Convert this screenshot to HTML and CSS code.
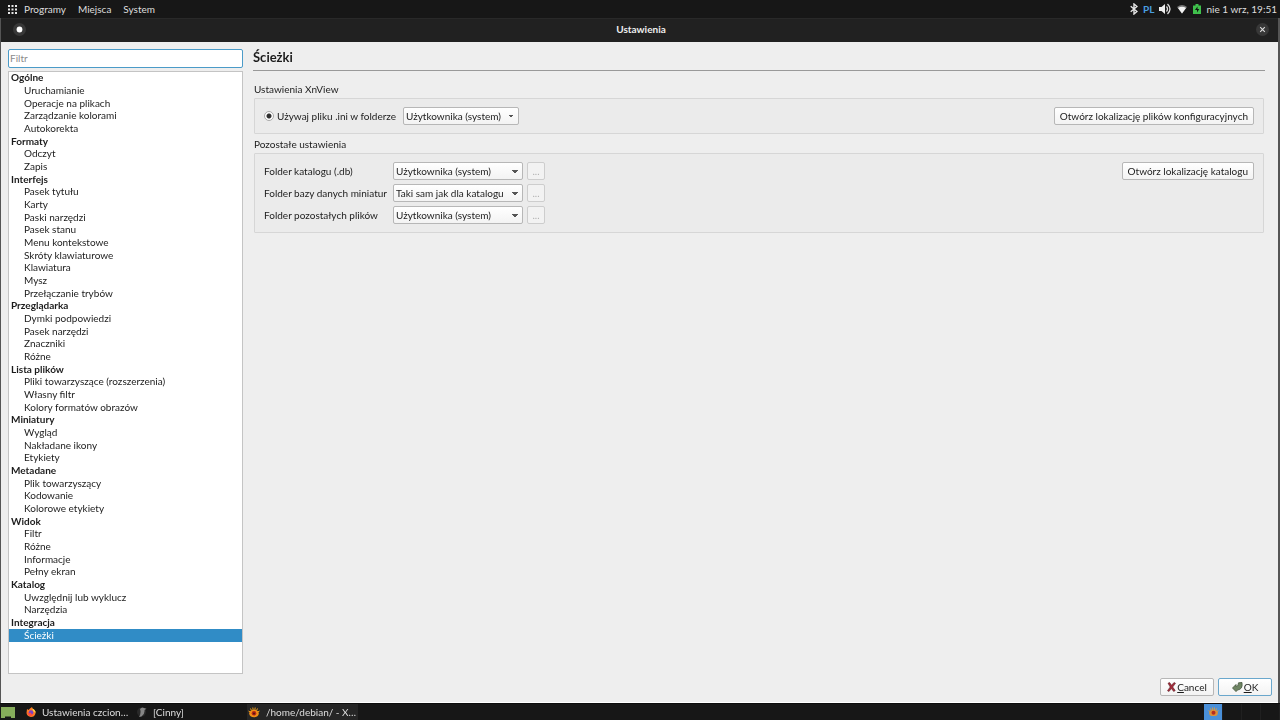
FILE: index.html
```html
<!DOCTYPE html>
<html lang="pl">
<head>
<meta charset="utf-8">
<title>Ustawienia</title>
<link rel="stylesheet" href="styles.css">
</head>
<body>
<header class="panel">
  <nav class="panel-menu">
    <svg class="grid-icon" viewBox="0 0 9 9" width="9" height="9" fill="#e8e8e8"><path d="M0 0h2v2H0zM3.5 0h2v2h-2zM7 0h2v2H7zM0 3.5h2v2H0zM3.5 3.5h2v2h-2zM7 3.5h2v2H7zM0 7h2v2H0zM3.5 7h2v2h-2zM7 7h2v2H7z"/></svg>
    <button class="menu-button">Programy</button>
    <button class="menu-button">Miejsca</button>
    <button class="menu-button">System</button>
  </nav>
  <div class="tray">
    <svg class="bluetooth" viewBox="0 0 8 12" width="8" height="12" fill="none" stroke="#e6e6e6" stroke-width="1.4"><path d="M.700 3.300 7 8.500 4 11V1l3 2.500-6.300 5.200"/></svg>
    <span class="layout">PL</span>
    <svg class="volume" viewBox="0 0 12 12" width="12" height="12"><path d="M0 4h2.500L6 1v10L2.500 8H0z" fill="#eee"/><path d="M7.500 3.500q2 2.500 0 5M8.500 1q5 5 0 10" fill="none" stroke="#ddd" stroke-width="1.300"/></svg>
    <svg class="wifi" viewBox="0 0 12 10" width="12" height="10"><path d="M1 3Q6-1 11 3L6 9.500z" fill="#777"/><path d="M2 4Q6 1.500 10 4L6 9.500z" fill="#f2f2f2"/></svg>
    <svg class="battery" viewBox="0 0 8 10" width="8" height="10"><path d="M2.500 0h3v1.500H8V10H0V1.500h2.500z" fill="#3fc04c"/><path d="M4.500 2.500 2 6h2v2.500L6.300 5H4.500z" fill="#111"/></svg>
    <time class="clock">nie 1 wrz, 19:51</time>
  </div>
</header>

<section class="window">
  <header class="titlebar">
    <button class="round-button" aria-label="Menu okna"><svg viewBox="0 0 13 13" width="13" height="13"><circle cx="6.500" cy="6.500" r="2.900" fill="#fff"/></svg></button>
    <h1 class="title">Ustawienia</h1>
    <button class="round-button" aria-label="Zamknij"><svg viewBox="0 0 13 13" width="13" height="13"><path d="m4.200 4.200 4.600 4.600m0-4.600L4.200 8.800" stroke="#ddd" stroke-width="1.100"/></svg></button>
  </header>

  <div class="content">
    <aside class="sidebar">
      <input class="filter" type="text" placeholder="Filtr" aria-label="Filtr" autofocus>
      <ul class="tree">
        <li class="group">Ogólne</li>
        <li>Uruchamianie</li><li>Operacje na plikach</li><li>Zarządzanie kolorami</li><li>Autokorekta</li>
        <li class="group">Formaty</li>
        <li>Odczyt</li><li>Zapis</li>
        <li class="group">Interfejs</li>
        <li>Pasek tytułu</li><li>Karty</li><li>Paski narzędzi</li><li>Pasek stanu</li><li>Menu kontekstowe</li><li>Skróty klawiaturowe</li><li>Klawiatura</li><li>Mysz</li><li>Przełączanie trybów</li>
        <li class="group">Przeglądarka</li>
        <li>Dymki podpowiedzi</li><li>Pasek narzędzi</li><li>Znaczniki</li><li>Różne</li>
        <li class="group">Lista plików</li>
        <li>Pliki towarzyszące (rozszerzenia)</li><li>Własny filtr</li><li>Kolory formatów obrazów</li>
        <li class="group">Miniatury</li>
        <li>Wygląd</li><li>Nakładane ikony</li><li>Etykiety</li>
        <li class="group">Metadane</li>
        <li>Plik towarzyszący</li><li>Kodowanie</li><li>Kolorowe etykiety</li>
        <li class="group">Widok</li>
        <li>Filtr</li><li>Różne</li><li>Informacje</li><li>Pełny ekran</li>
        <li class="group">Katalog</li>
        <li>Uwzględnij lub wyklucz</li><li>Narzędzia</li>
        <li class="group">Integracja</li>
        <li class="selected">Ścieżki</li>
      </ul>
    </aside>

    <main class="page">
      <h2 class="page-title">Ścieżki</h2>

      <h3 class="box-title">Ustawienia XnView</h3>
      <div class="box ini-box">
        <label class="radio-label"><input class="radio" type="radio" name="ini" checked>Używaj pliku .ini w folderze</label>
        <select class="select ini-select" aria-label="Folder pliku .ini"><option>Użytkownika (system)</option></select>
        <button class="button push">Otwórz lokalizację plików konfiguracyjnych</button>
      </div>

      <h3 class="box-title">Pozostałe ustawienia</h3>
      <div class="box folders-box">
        <div class="folders">
          <label for="catalog">Folder katalogu (.db)</label>
          <select class="select" id="catalog"><option>Użytkownika (system)</option></select>
          <button class="button browse" disabled>...</button>
          <label for="thumbs">Folder bazy danych miniatur</label>
          <select class="select" id="thumbs"><option>Taki sam jak dla katalogu</option></select>
          <button class="button browse" disabled>...</button>
          <label for="others">Folder pozostałych plików</label>
          <select class="select" id="others"><option>Użytkownika (system)</option></select>
          <button class="button browse" disabled>...</button>
        </div>
        <button class="button push">Otwórz lokalizację katalogu</button>
      </div>
    </main>
  </div>

  <footer class="actions">
    <button class="button action"><svg viewBox="0 0 9 10" width="9" height="10"><path d="M1 1.200 2.700.600 4.500 3.300 7 .500l1.500.800L5.700 5l2.500 3.500-1.500 1L4.400 6.500 2 9.500.500 8.700 3.200 5z" fill="#a52b3a" stroke="#5d2229" stroke-width=".6"/></svg><span><u>C</u>ancel</span></button>
    <button class="button action default"><svg viewBox="0 0 11 10" width="11" height="10"><path d="M.500 6 4 2.500v2Q6.500 4.500 6.500.800L10 .500Q11 7.500 5.500 8L4 9.600z" fill="#6f8563" stroke="#41533b" stroke-width=".8"/></svg><span><u>O</u>K</span></button>
  </footer>
</section>

<footer class="taskbar">
  <button class="desktop-button" aria-label="Pokaż pulpit"><svg viewBox="0 0 14 11" width="14" height="11"><path d="M0 0h14v11h-4V9.500H4V11H0z" fill="#87ad5b"/></svg></button>
  <button class="task task-fonts"><svg viewBox="0 0 10 10" width="10" height="10"><path d="M1 2 2.500 3 4 1.500 6 0Q6 1.500 8 2.500 10 4 9.500 6.500 8.500 10 5 10 1 9.500.500 6z" fill="#ff7d25"/><path d="M6 0Q6 1.500 8 2.500 10 4 9.500 6L7 4z" fill="#ffd545"/><circle cx="5" cy="5.500" r="2.300" fill="#7a42c8"/><path d="M1 5q2 2 4 .500Q5 8 7.500 7.500 5 10 2.500 8.500z" fill="#ff4d3d"/></svg><span class="task-label">Ustawienia czcion…</span></button>
  <button class="task task-cinny"><svg viewBox="0 0 10 10" width="10" height="10"><circle cx="4.500" cy="5" r="4.500" fill="#292929"/><path d="M3 2Q5-.500 7 1l2.500.800L7.500 3Q8 7 4.500 9.500L2 10Q4.500 6 3 2z" fill="#858585"/></svg><span class="task-label">[Cinny]</span></button>
  <button class="task task-active"><svg viewBox="0 0 12 11" width="12" height="11"><path d="M2.500 1.500l1 2M4.800.500l.4 3M7.200.500l-.4 3M9.500 1.500l-1 2M.500 4l2.500 1.500M11.500 4L9 5.500" stroke="#f3a11e"/><ellipse cx="6" cy="6.500" rx="4.800" ry="3.800" fill="#ef8d16"/><circle cx="6" cy="6.300" r="2.300" fill="#b72516"/><circle cx="6" cy="6.500" r="1" fill="#471515"/></svg><span class="task-label">/home/debian/ - X…</span></button>
  <div class="pager">
    <button class="workspace current" aria-label="Obszar 1"><svg viewBox="0 0 12 11" width="11" height="10"><path d="M2.500 1.500l1 2M4.800.500l.4 3M7.200.500l-.4 3M9.500 1.500l-1 2M.500 4l2.500 1.500M11.500 4L9 5.500" stroke="#e99b35"/><ellipse cx="6" cy="6.500" rx="4.800" ry="3.500" fill="#db903b"/><circle cx="6" cy="6.300" r="2.200" fill="#b52d23"/></svg></button>
    <button class="workspace" aria-label="Obszar 2"></button>
    <button class="workspace" aria-label="Obszar 3"></button>
    <button class="workspace" aria-label="Obszar 4"></button>
  </div>
</footer>
</body>
</html>
```
FILE: styles.css
```css
* { box-sizing: border-box; }

body {
  margin: 0;
  min-height: 100vh;
  display: flex;
  flex-direction: column;
  background: #171717;
  color: #1c1c1c;
  font: 10px/13px Lato, "Noto Sans", sans-serif;
}

button, input, select { font: inherit; color: inherit; margin: 0; }
button { border: 0; background: none; padding: 0; }
h1, h2, h3, ul { margin: 0; padding: 0; font-size: inherit; }
svg { display: block; flex: none; }

.panel {
  display: flex;
  justify-content: space-between;
  align-items: center;
  height: 18px;
  padding: 0 3px 0 8px;
  color: #dedede;
}
.panel-menu { display: flex; align-items: center; gap: 12px; }
.grid-icon { margin-right: -5px; }
.tray { display: flex; align-items: center; gap: 5px; white-space: nowrap; }
.layout { color: #4a9fe0; font-weight: 700; }

.window {
  flex: 1;
  display: flex;
  flex-direction: column;
  border: solid #555;
  border-width: 0 2px 0 1px;
  background: #eee;
}
.titlebar {
  display: flex;
  align-items: center;
  justify-content: space-between;
  height: 24px;
  padding: 0 9px 2px 12px;
  background: #212121;
  border-top: 1px solid #292929;
  color: #eee;
}
.round-button {
  display: grid;
  place-items: center;
  width: 13px;
  height: 13px;
  border-radius: 50%;
  background: #383838;
}

.content { flex: 1; display: flex; gap: 10px; padding: 7px 13px 0 7px; }
.sidebar { display: flex; flex-direction: column; gap: 3px; width: 235px; }
.filter {
  height: 19px;
  padding: 0 1px 2px;
  border: 1px solid #4b9bc8;
  border-radius: 2px;
  background: #fff;
  outline: 0;
}
.filter::placeholder { color: #8b8b8b; opacity: 1; }
.tree {
  flex: 1;
  display: grid;
  grid-auto-rows: 1fr;
  padding-bottom: 31px;
  border: 1px solid #c4c4c4;
  background: #fff;
  list-style: none;
}
.tree li { display: flex; align-items: center; height: 100%; min-height: 0; line-height: 11px; padding: 0 0 1px 15px; }
.tree .group { padding-left: 2px; font-weight: 700; }
.tree .selected { background: #308cc6; color: #fff; }

.page { flex: 1; }
.page-title {
  padding: 1px 0 5px;
  border-bottom: 1px solid #999;
  font-size: 13px;
  line-height: 15px;
}
.box-title { margin: 12px 1px 2px; font-weight: 400; }
.box {
  display: flex;
  margin: 0 1px;
  padding: 8px 9px;
  border: 1px solid #d6d6d6;
  border-radius: 1px;
  background: #ebebeb;
}
.box + .box-title { margin-top: 4px; }
.ini-box { align-items: center; }
.folders-box { align-items: flex-start; }
.folders { display: grid; grid-template-columns: 125px 130px 18px; gap: 4px; align-items: center; }
.folders label { white-space: nowrap; }

.radio-label { display: flex; align-items: center; gap: 3px; min-width: 135px; white-space: nowrap; }
.radio {
  appearance: none;
  width: 10px;
  height: 10px;
  border: 1px solid #aaa;
  border-radius: 50%;
  background: radial-gradient(circle, #303030 0 2px, #fff 3px);
}
.select, .button {
  height: 18px;
  border: 1px solid #b7b7b7;
  border-radius: 2px;
  background: linear-gradient(#fff, #f3f3f3);
  color: #1c1c1c;
  line-height: 14px;
}
.select {
  appearance: none;
  width: 100%;
  padding: 0 2px;
  background:
    conic-gradient(from -45deg at 50% 100%, #555 90deg, transparent 0) right 4px center / 6px 3px no-repeat,
    linear-gradient(#fff, #f3f3f3);
}
.ini-select { width: 116px; margin-left: 4px; }
.push { margin-left: auto; padding: 0 5px; white-space: nowrap; }
.browse { border-color: #cdcdcd; background: #f2f2f2; color: #b0b0b0; }

.actions { display: flex; justify-content: flex-end; gap: 4px; padding: 4px 6px 6px; border-bottom: 1px solid #fff; }
.action { display: flex; align-items: center; justify-content: center; gap: 1px; width: 54px; }
.default { border-color: #6aa7cc; }
u { text-underline-offset: 1px; }

.taskbar { display: flex; align-items: stretch; height: 17px; border-top: 1px solid #0d0d0d; color: #dedede; }
.desktop-button { display: flex; align-items: flex-end; width: 25px; padding: 0 0 2px 1px; }
.task { display: flex; align-items: center; gap: 6px; width: 111px; padding: 0 1px; text-align: left; white-space: nowrap; }
.task-active { background: #252525; }
.pager { display: flex; margin-left: auto; }
.workspace { display: grid; place-items: center; width: 19px; border-right: 1px solid #202020; }
.current { background: #4a90d9; }
```
